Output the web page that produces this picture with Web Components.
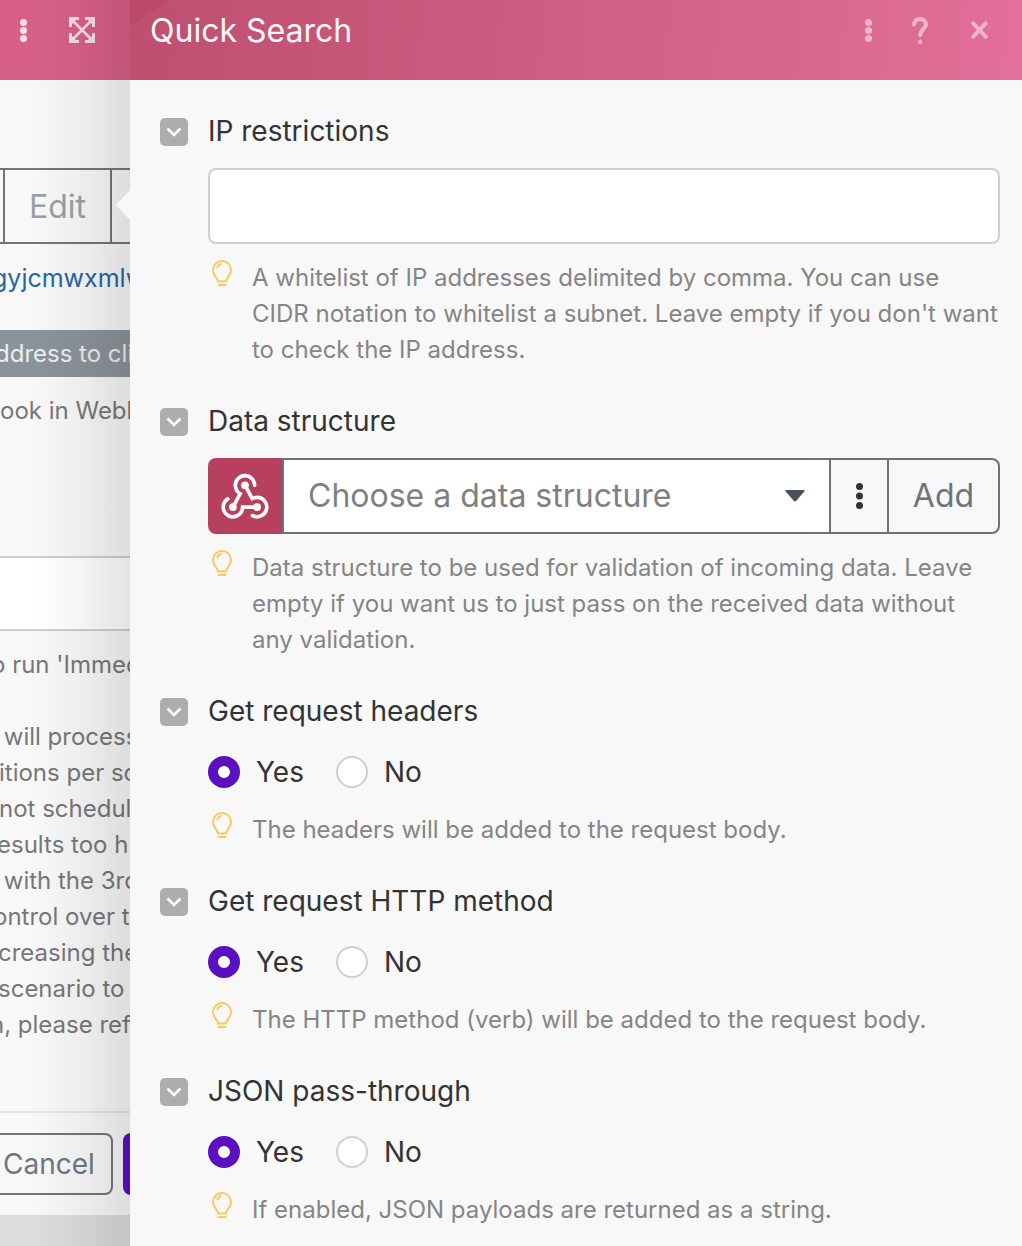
<!DOCTYPE html>
<html>
<head>
<meta charset="utf-8">
<title>Quick Search</title>
<style>
  html, body { margin: 0; height: 100%; overflow: hidden; }
  body { font-family: Inter, "Liberation Sans", sans-serif; background: #f8f8f8; }
  .page { display: flex; width: 1022px; height: 1246px; overflow: hidden; }
</style>
</head>
<body>
<div class="page">
  <back-pane></back-pane>
  <search-panel>
    <form-section label="IP restrictions">
      <text-box></text-box>
      <hint-text>A whitelist of IP addresses delimited by comma. You can use CIDR notation to whitelist a subnet. Leave empty if you don't want to check the IP address.</hint-text>
    </form-section>
    <form-section label="Data structure">
      <structure-select></structure-select>
      <hint-text>Data structure to be used for validation of incoming data. Leave empty if you want us to just pass on the received data without any validation.</hint-text>
    </form-section>
    <form-section label="Get request headers">
      <yes-no></yes-no>
      <hint-text gap="24">The headers will be added to the request body.</hint-text>
    </form-section>
    <form-section label="Get request HTTP method">
      <yes-no></yes-no>
      <hint-text gap="24">The HTTP method (verb) will be added to the request body.</hint-text>
    </form-section>
    <form-section label="JSON pass-through">
      <yes-no></yes-no>
      <hint-text gap="24">If enabled, JSON payloads are returned as a string.</hint-text>
    </form-section>
  </search-panel>
</div>

<script>
// three dots used in both headers and in the select
const kebab = (h, r, fill) => `<svg width="${r * 2}" height="${h}" viewBox="0 0 ${r * 2} ${h}" style="display:block">
  <circle cx="${r}" cy="${r}" r="${r}" fill="${fill}"/><circle cx="${r}" cy="${h / 2}" r="${r}" fill="${fill}"/><circle cx="${r}" cy="${h - r}" r="${r}" fill="${fill}"/></svg>`;

class BackPane extends HTMLElement {
    constructor() {
        super();
        this.attachShadow({ mode: 'open' });
        this.shadowRoot.innerHTML = `
            <style>
                :host { display: block; position: relative; flex: none; width: 130px; height: 1246px; overflow: hidden;
                    background: #dcdcdc; font-size: 24px; line-height: 36px; color: #777; }
                .head { height: 80px; box-sizing: border-box; padding-bottom: 20px; background: #d86087; display: flex; align-items: center; }
                .dots { margin-left: 20px; }
                .expand { margin-left: 42px; }
                .modal { height: 1135px; background: #f8f8f8; overflow: hidden; white-space: nowrap; padding-top: 88px; box-sizing: border-box; }
                .tabs { display: flex; height: 76px; box-sizing: border-box; border: solid #6e7680; border-width: 2px 0; margin-right: -10px; }
                .tab { flex: none; width: 109px; margin-left: 3px; box-sizing: border-box; border: solid #6e7680; border-width: 0 2px;
                    font-size: 32px; line-height: 74px; text-align: center; color: #99a0a7; }
                .link { margin-top: 16px; margin-left: -8px; color: #2765a5; font-size: 25px; }
                .bar { margin-top: 34px; height: 47px; line-height: 47px; background: #8b939a; color: #eceeef; text-indent: -5px; }
                .plain { margin-top: 16px; }
                .field { margin-top: 127px; height: 75px; box-sizing: border-box; background: #fff; border: solid #cfcfcf; border-width: 2px 0; }
                .para { margin-top: 16px; height: 396px; }
                .line { height: 36px; }
                .foot { margin-top: 68px; border-top: 2px solid #e4e4e4; padding-top: 20px; display: flex; }
                .cancel { flex: none; width: 113px; height: 62px; box-sizing: border-box; border: 2px solid #6e7680; border-left: 0;
                    border-radius: 0 8px 8px 0; font-size: 28px; line-height: 58px; color: #6e7680; padding-left: 3px; }
                .go { flex: none; width: 30px; height: 62px; margin-left: 10px; background: #5a0fc0; border-radius: 8px 0 0 8px; }
                .shade { position: absolute; inset: 0; pointer-events: none;
                    background: linear-gradient(90deg, rgba(0,0,0,0) 25%, rgba(0,0,0,.04) 60%, rgba(0,0,0,.11) 100%); }
                .notch { position: absolute; left: 116px; top: 190px; }
            </style>
            <div class="head">
                <span class="dots">${kebab(23, 3.5, '#f8e3ea')}</span>
                <svg class="expand" width="26" height="26" viewBox="0 0 26 26" fill="none" stroke="#f5dde6" stroke-width="3">
                    <path d="M1.500 10V1.500H10M16 1.500h8.500V10M24.500 16v8.500H16M10 24.500H1.500V16"/>
                    <path d="M3 3l20 20M23 3L3 23" stroke-width="2.600"/>
                    <path d="M2 2h6L2 8zM24 2h-6l6 6zM24 24h-6l6-6zM2 24h6l-6-6z" fill="#f5dde6" stroke="none"/>
                </svg>
            </div>
            <div class="modal">
                <div class="tabs"><div class="tab">Edit</div></div>
                <div class="link">gyjcmwxmlw</div>
                <div class="bar">ddress to cli</div>
                <div class="plain">ook in Webh</div>
                <div class="field"></div>
                <div class="para">
                    <div class="line" style="margin-left:-9px">o run 'Immed</div>
                    <div class="line"></div>
                    <div class="line" style="margin-left:-3px">&nbsp;will process</div>
                    <div class="line" style="margin-left:-1px">itions per sc</div>
                    <div class="line" style="margin-left:-1px">not schedul</div>
                    <div class="line" style="margin-left:-3px">esults too h</div>
                    <div class="line" style="margin-left:-3px">&nbsp;with the 3rc</div>
                    <div class="line" style="margin-left:-7px">ontrol over t</div>
                    <div class="line" style="margin-left:-2px">creasing the</div>
                    <div class="line" style="margin-left:-2px">scenario to</div>
                    <div class="line" style="margin-left:-10px">n, please ref</div>
                </div>
                <div class="foot"><div class="cancel">Cancel</div><div class="go"></div></div>
            </div>
            <div class="shade"></div>
            <svg class="notch" width="14" height="30" viewBox="0 0 14 30"><path d="M0 15L14 0v30z" fill="#f8f8f8"/></svg>
        `;
    }
}

class SearchPanel extends HTMLElement {
    constructor() {
        super();
        this.attachShadow({ mode: 'open' });
        this.shadowRoot.innerHTML = `
            <style>
                :host { display: block; flex: 1; background: #f8f8f8; }
                header { height: 80px; box-sizing: border-box; padding: 0 34px 20px 20px; display: flex; align-items: center; color: #fff; font-size: 32px;
                    background: linear-gradient(148deg, rgba(170,40,80,.14) 0 22px, transparent 22px), linear-gradient(95deg, #bf4f6f 0%, #cf5f83 50%, #e2709a 100%); }
                .title { flex: 1; opacity: .96; }
                .icons { display: flex; align-items: center; }
                .q { margin-left: 40px; }
                .x { margin-left: 43px; }
                .list { padding: 31px 22px 0 30px; display: flex; flex-direction: column; gap: 33px; }
            </style>
            <header>
                <span class="title">Quick Search</span>
                <span class="icons">
                    ${kebab(23, 3.5, '#f1b4cb')}
                    <svg class="q" width="16" height="27" viewBox="0 0 16 27" fill="none" stroke="#f1b4cb" stroke-width="4.200" stroke-linecap="round">
                        <path d="M2.100 7.500C2.500 3.800 5 2.100 8 2.100c3.500 0 5.900 2.200 5.900 5.200 0 4.700-5.700 5.300-5.700 10.700"/><path d="M8.200 24.700v.1"/>
                    </svg>
                    <svg class="x" width="17" height="18" viewBox="0 0 17 18" fill="none" stroke="#f1b4cb" stroke-width="3.800">
                        <path d="M1 1l15 16M16 1L1 17"/>
                    </svg>
                </span>
            </header>
            <div class="list"><slot></slot></div>
        `;
    }
}

class FormSection extends HTMLElement {
    constructor() {
        super();
        this.attachShadow({ mode: 'open' });
        this.shadowRoot.innerHTML = `
            <style>
                :host { display: block; }
                .head { display: flex; align-items: center; height: 40px; font-size: 28px; color: #333; }
                .box { flex: none; width: 28px; height: 28px; margin-top: 2px; border-radius: 5px; background: #adadad; margin-right: 20px;
                    display: flex; align-items: center; justify-content: center; }
                .body { padding-left: 48px; }
            </style>
            <div class="head">
                <span class="box"><svg width="16" height="10" viewBox="0 0 16 10" fill="none" stroke="#fff" stroke-width="2.600"><path d="M1.500 1.500L8 8l6.500-6.500"/></svg></span>
                <span class="label"></span>
            </div>
            <div class="body"><slot></slot></div>
        `;
        this.shadowRoot.querySelector('.label').textContent = this.getAttribute('label');
    }
}

class TextBox extends HTMLElement {
    constructor() {
        super();
        this.attachShadow({ mode: 'open' });
        this.shadowRoot.innerHTML = `
            <style>
                :host { display: block; margin-top: 17px; height: 76px; box-sizing: border-box; background: #fff;
                    border: 2px solid #cfcfcf; border-radius: 8px; }
            </style>
        `;
    }
}

class StructureSelect extends HTMLElement {
    constructor() {
        super();
        this.attachShadow({ mode: 'open' });
        this.shadowRoot.innerHTML = `
            <style>
                :host { display: flex; margin-top: 17px; height: 76px; font-size: 32px; }
                .logo { flex: none; width: 74px; background: #b8405f; border-radius: 8px 0 0 8px; display: flex; align-items: center; justify-content: center; }
                .logo svg { margin-top: -2px; }
                .main { flex: 1; display: flex; box-sizing: border-box; border: 2px solid #6b747c; border-radius: 0 8px 8px 0; }
                .choose { flex: 1; background: #fff; color: #808080; display: flex; align-items: center; padding-left: 24px; }
                .choose span { flex: 1; margin-top: -2px; }
                .caret { margin-right: 24px; }
                .more { flex: none; width: 58px; box-sizing: border-box; border-left: 2px solid #6b747c; display: flex; align-items: center; justify-content: center; }
                .add { flex: none; width: 111px; box-sizing: border-box; border-left: 2px solid #6b747c; color: #6b747c; text-align: center; line-height: 72px; }
            </style>
            <div class="logo">
                <svg width="58" height="58" viewBox="0 0 24 24" fill="none" stroke="#fff" stroke-width="1.500" stroke-linecap="round">
                    <path d="M4.876 13.610a4 4 0 1 0 6.124 3.390h6"/>
                    <path d="M15.066 20.502a4 4 0 1 0 1.934-7.502c-.706 0-1.424.179-2 .5l-3-5.500"/>
                    <path d="M16 8a4 4 0 1 0-8 0c0 1.506.77 2.818 2 3.500l-3 5.500"/>
                    <circle cx="12" cy="8" r="1.600" fill="#fff" stroke="none"/><circle cx="7" cy="17" r="1.600" fill="#fff" stroke="none"/><circle cx="17" cy="17" r="1.600" fill="#fff" stroke="none"/>
                </svg>
            </div>
            <div class="main">
                <div class="choose"><span>Choose a data structure</span>
                    <svg class="caret" width="20" height="12" viewBox="0 0 20 12"><path d="M1.500 0h17q1.800 0 .8 1.500l-8 9.300q-1.300 1.400-2.600 0l-8-9.300Q-.3 0 1.500 0z" fill="#4a5158"/></svg>
                </div>
                <div class="more">${kebab(26, 3.5, '#333')}</div>
                <div class="add">Add</div>
            </div>
        `;
    }
}

class HintText extends HTMLElement {
    constructor() {
        super();
        this.attachShadow({ mode: 'open' });
        const gap = this.getAttribute('gap') || 16;
        this.shadowRoot.innerHTML = `
            <style>
                :host { display: flex; margin-top: ${gap}px; font-size: 24px; line-height: 36px; color: #858585; }
                svg { flex: none; margin: 0 20px 0 4px; }
            </style>
            <svg width="20" height="28" viewBox="0 0 20 28" fill="none" stroke="#f8c95e" stroke-width="2" stroke-linecap="round" stroke-linejoin="round">
                <path d="M6 21.500C5.500 17.500 1 15.500 1 10a9 9 0 0 1 18 0c0 5.500-4.500 7.500-5 11.500z"/>
                <path d="M5.500 7.500C6 5.500 7.500 4.200 9 4"/><path d="M6.500 25h7"/>
            </svg>
            <div><slot></slot></div>
        `;
    }
}

class YesNo extends HTMLElement {
    constructor() {
        super();
        this.attachShadow({ mode: 'open' });
        this.shadowRoot.innerHTML = `
            <style>
                :host { display: flex; align-items: center; margin-top: 25px; height: 32px; font-size: 28px; color: #333; }
                .on, .off { flex: none; width: 32px; height: 32px; box-sizing: border-box; border-radius: 50%; background: #fff; }
                .on { border: 10px solid #5a0fc0; margin-right: 16px; }
                .off { border: 2px solid #cfcfcf; margin: 0 16px 0 32px; }
            </style>
            <span class="on"></span><span>Yes</span><span class="off"></span><span>No</span>
        `;
    }
}

customElements.define('back-pane', BackPane);
customElements.define('search-panel', SearchPanel);
customElements.define('form-section', FormSection);
customElements.define('text-box', TextBox);
customElements.define('structure-select', StructureSelect);
customElements.define('hint-text', HintText);
customElements.define('yes-no', YesNo);
</script>
</body>
</html>
